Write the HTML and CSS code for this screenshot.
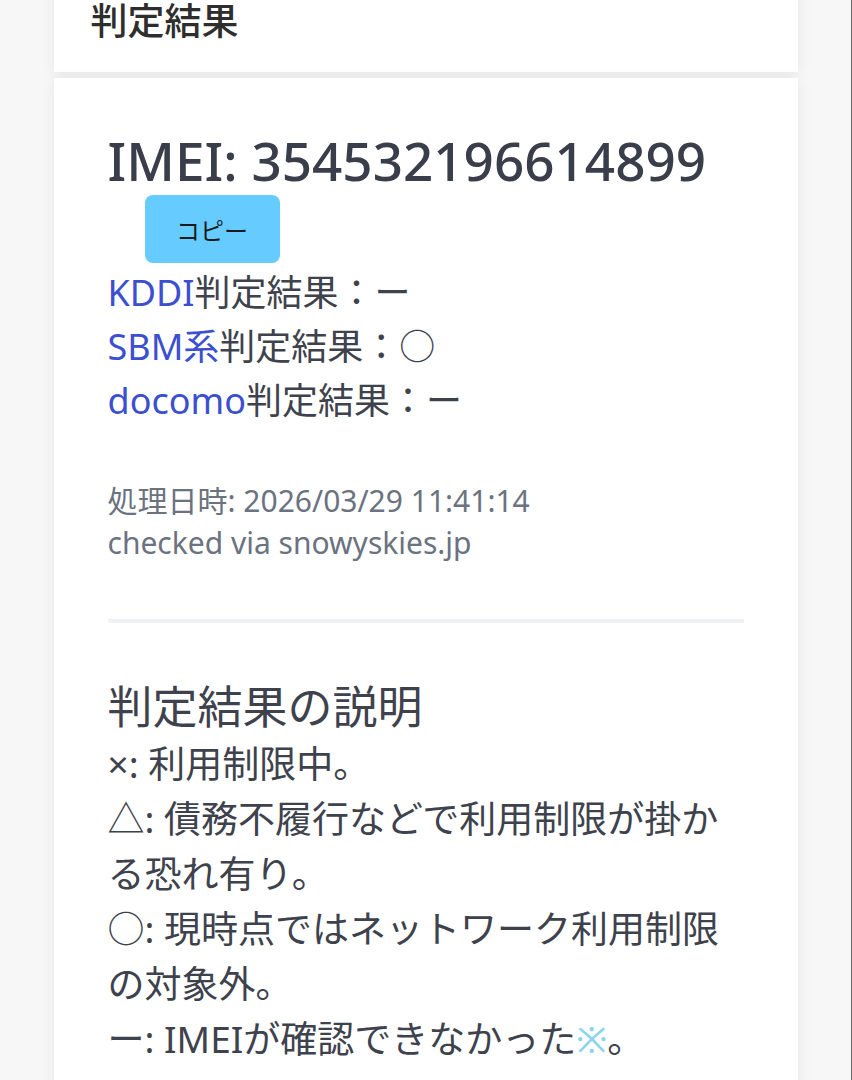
FILE: index.html
```html
<!DOCTYPE html>
<html lang="ja">
<head>
    <meta charset="UTF-8">
    <meta name="viewport" content="width=device-width, initial-scale=1.0">
    <title>判定結果</title>
    <link rel="stylesheet" href="styles.css">
</head>
<body>
    <div class="page">
        <div class="card card-head">
            <h2>判定結果</h2>
        </div>

        <div class="card card-main">
            <h1 class="imei">IMEI: 354532196614899</h1>
            <button class="copy-btn" type="button">コピー</button>

            <div class="results">
                <p><a href="#">KDDI</a>判定結果：ー</p>
                <p><a href="#">SBM系</a>判定結果：○</p>
                <p><a href="#">docomo</a>判定結果：ー</p>
            </div>

            <div class="meta">
                <p>処理日時: 2026/03/29 11:41:14</p>
                <p>checked via snowyskies.jp</p>
            </div>

            <hr class="divider">

            <h3 class="legend-title">判定結果の説明</h3>
            <div class="legend">
                <p>×: 利用制限中。</p>
                <p>△: 債務不履行などで利用制限が掛かる恐れ有り。</p>
                <p>○: 現時点ではネットワーク利用制限の対象外。</p>
                <p>ー: IMEIが確認できなかった<a href="#" class="note">※</a>。</p>
            </div>
        </div>
    </div>
</body>
</html>
```

FILE: styles.css
```css
body {
    margin: 0;
    min-height: 100vh;
    background: #f7f7f7;
    border-right: 1px solid #666;
    font-family: "Noto Sans", "Noto Sans CJK JP", sans-serif;
    color: #3e424c;
}

.page {
    width: 744px;
    margin: 0 auto;
}

.card {
    background: #fff;
    box-shadow: 0 2px 14px rgba(0, 0, 0, 0.07);
}

.card-head {
    margin-top: -16px;
    padding: 13px 37px 27px;
}

.card-head h2 {
    margin: 0;
    font-size: 37px;
    line-height: 48px;
    font-weight: 500;
    color: #2e2e2e;
}

.card-main {
    margin-top: 6px;
    padding: 52px 54px 80px;
}

.imei {
    margin: 0;
    font-size: 53px;
    line-height: 62px;
    font-weight: 500;
    color: #3a3e4a;
}

.copy-btn {
    display: block;
    margin: 3px 0 0 37px;
    width: 135px;
    height: 68px;
    border: none;
    border-radius: 8px;
    background: #66ccff;
    color: #1a1a1a;
    font-family: inherit;
    font-size: 24px;
    cursor: pointer;
}

.results {
    margin-top: 3px;
}

.results p {
    margin: 0;
    font-size: 36px;
    line-height: 54px;
}

.results a {
    color: #3b4fd0;
    text-decoration: none;
}

.meta {
    margin-top: 52px;
}

.meta p {
    margin: 0;
    font-size: 30px;
    line-height: 42px;
    color: #6b7280;
}

.divider {
    margin: 55px 0 0;
    border: none;
    height: 4px;
    background: #f0f1f4;
}

.legend-title {
    margin: 55px 0 0;
    font-size: 45px;
    line-height: 58px;
    font-weight: 400;
}

.legend {
    max-width: 624px;
}

.legend p {
    margin: 0;
    font-size: 37px;
    line-height: 55px;
}

.legend .note {
    color: #8ad4ee;
    text-decoration: none;
}
```
